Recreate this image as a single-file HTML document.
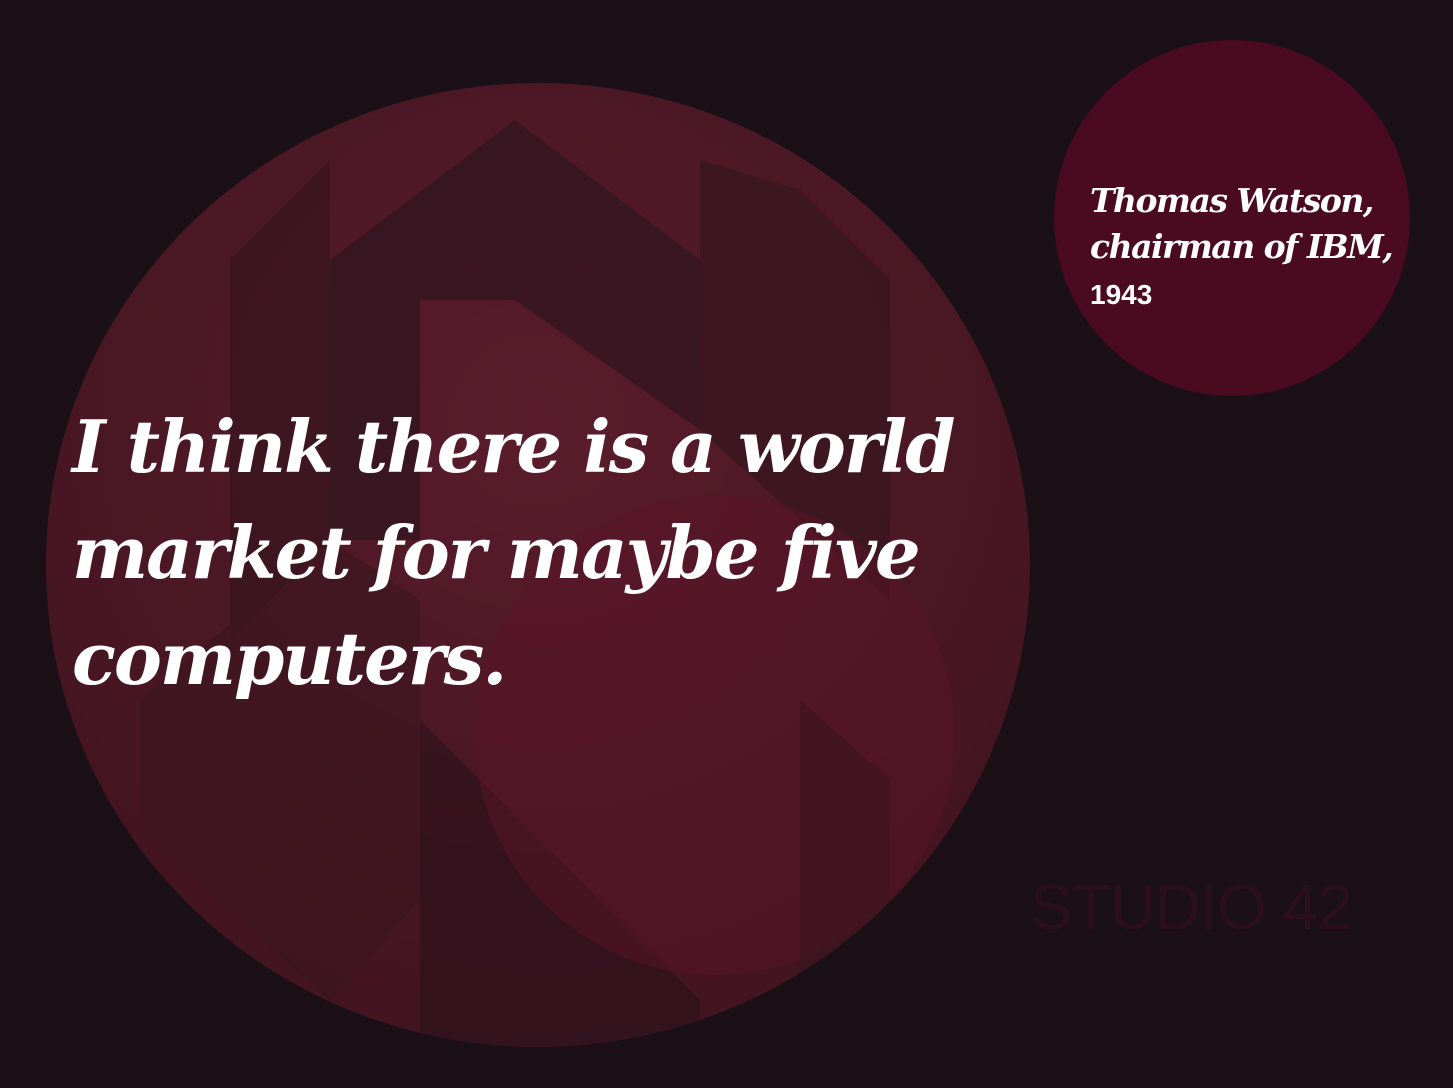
<!DOCTYPE html>
<html><head><meta charset="utf-8"><style>
html,body{margin:0;padding:0;background:#1a1016;width:1453px;height:1088px;overflow:hidden}
.q{position:absolute;left:72px;top:394px;color:#fff;font-family:"DejaVu Serif","Liberation Serif",serif;font-style:italic;font-weight:bold;font-size:72px;line-height:106px;letter-spacing:-2px}
.a{position:absolute;left:1090px;top:178px;color:#fff;font-family:"DejaVu Serif","Liberation Serif",serif;font-style:italic;font-weight:bold;font-size:33px;line-height:46px;letter-spacing:-1.5px}
.y{font-family:"Liberation Sans",sans-serif;font-style:normal;font-size:28px;letter-spacing:0}
.s{position:absolute;left:1030px;top:870px;color:#2c0f1d;font-family:"Liberation Sans",sans-serif;font-size:64px;letter-spacing:-1px}
</style></head><body>
<svg width="1453" height="1088" style="position:absolute;left:0;top:0">
<defs>
<clipPath id="c"><ellipse cx="538" cy="565" rx="492" ry="482"/></clipPath>
<radialGradient id="g" cx="0.5" cy="0.35" r="0.7"><stop offset="0" stop-color="#5a1c2c"/><stop offset="1" stop-color="#40141f"/></radialGradient>
</defs>
<ellipse cx="538" cy="565" rx="492" ry="482" fill="url(#g)"/>
<g clip-path="url(#c)">
<polygon points="230,260 330,160 330,540 230,640" fill="#3a1520" opacity="0.8"/>
<polygon points="330,260 515,120 700,260 700,430 515,300 420,300 420,540 330,540" fill="#321520" opacity="0.8"/>
<polygon points="700,160 800,190 890,280 890,600 800,520 700,430" fill="#351520" opacity="0.7"/>
<polygon points="140,700 330,540 420,600 420,900 330,1000 140,830" fill="#3a1520" opacity="0.6"/>
<polygon points="420,720 600,900 700,1000 700,1060 420,1060" fill="#2e121c" opacity="0.7"/>
<circle cx="715" cy="735" r="240" fill="#5a1428" opacity="0.5"/>
<polygon points="800,700 890,780 890,1060 800,1060" fill="#3a1520" opacity="0.6"/>
</g>
<circle cx="1232" cy="218" r="178" fill="#4a0a20"/>
</svg>
<div class="q">I think there is a world<br>market for maybe five<br>computers.</div>
<div class="a">Thomas Watson,<br>chairman of IBM,<br><span class="y">1943</span></div>
<div class="s">STUDIO 42</div>
</body></html>
